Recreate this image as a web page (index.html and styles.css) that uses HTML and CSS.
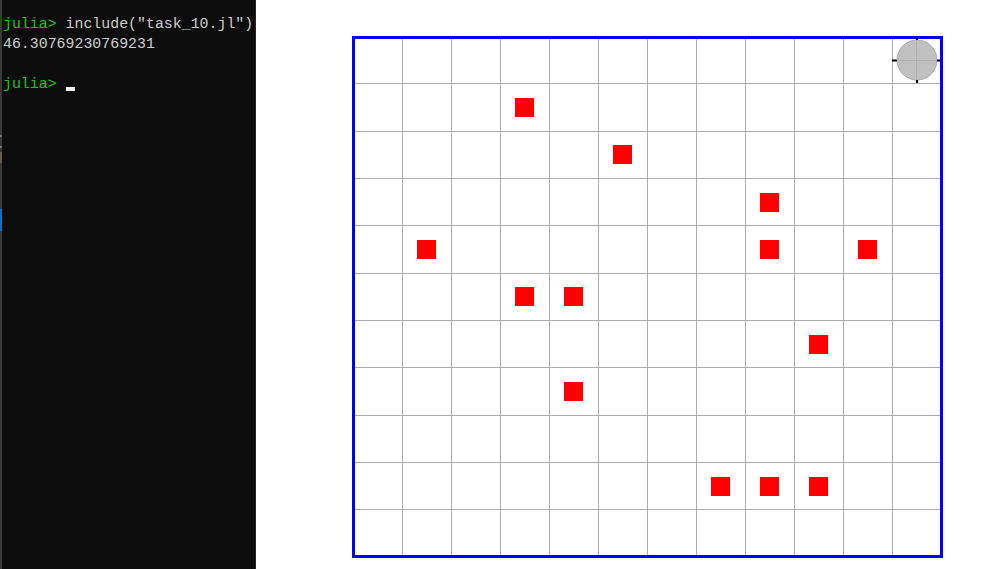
FILE: index.html
```html
<!DOCTYPE html>
<html>
<head>
<meta charset="utf-8">
<link rel="stylesheet" href="styles.css">
</head>
<body class="page">
  <div class="edge">
    <span class="edge-mark mark-a"></span>
    <span class="edge-mark mark-b"></span>
    <span class="edge-mark mark-c"></span>
    <span class="edge-mark mark-d"></span>
  </div>
  <div class="terminal">
    <div class="line"><span class="prompt">julia&gt;</span> include("task_10.jl")</div>
    <div class="line">46.30769230769231</div>
    <div class="line"> </div>
    <div class="line"><span class="prompt">julia&gt;</span> <span class="cursor"></span></div>
  </div>
  <div class="plot">
    <svg class="board" width="591" height="522" viewBox="0 0 591 522">
      <g stroke="#acacac" stroke-width="1">
        <line x1="50.5" y1="0" x2="50.5" y2="522"/>
        <line x1="99.5" y1="0" x2="99.5" y2="522"/>
        <line x1="148.5" y1="0" x2="148.5" y2="522"/>
        <line x1="197.5" y1="0" x2="197.5" y2="522"/>
        <line x1="246.5" y1="0" x2="246.5" y2="522"/>
        <line x1="295.5" y1="0" x2="295.5" y2="522"/>
        <line x1="344.5" y1="0" x2="344.5" y2="522"/>
        <line x1="393.5" y1="0" x2="393.5" y2="522"/>
        <line x1="442.5" y1="0" x2="442.5" y2="522"/>
        <line x1="491.5" y1="0" x2="491.5" y2="522"/>
        <line x1="540.5" y1="0" x2="540.5" y2="522"/>
        <line x1="0" y1="47.5" x2="591" y2="47.5"/>
        <line x1="0" y1="95.5" x2="591" y2="95.5"/>
        <line x1="0" y1="142.5" x2="591" y2="142.5"/>
        <line x1="0" y1="189.5" x2="591" y2="189.5"/>
        <line x1="0" y1="237.5" x2="591" y2="237.5"/>
        <line x1="0" y1="284.5" x2="591" y2="284.5"/>
        <line x1="0" y1="331.5" x2="591" y2="331.5"/>
        <line x1="0" y1="379.5" x2="591" y2="379.5"/>
        <line x1="0" y1="426.5" x2="591" y2="426.5"/>
        <line x1="0" y1="473.5" x2="591" y2="473.5"/>
      </g>
      <rect x="1.5" y="1.5" width="588" height="519" fill="none" stroke="#0000ff" stroke-width="3"/>
      <g fill="#ff0000">
        <rect x="163" y="62" width="19" height="19"/>
        <rect x="261" y="109" width="19" height="19"/>
        <rect x="408" y="157" width="19" height="19"/>
        <rect x="65" y="204" width="19" height="19"/>
        <rect x="408" y="204" width="19" height="19"/>
        <rect x="506" y="204" width="19" height="19"/>
        <rect x="163" y="251" width="19" height="19"/>
        <rect x="212" y="251" width="19" height="19"/>
        <rect x="457" y="299" width="19" height="19"/>
        <rect x="212" y="346" width="19" height="19"/>
        <rect x="359" y="441" width="19" height="19"/>
        <rect x="408" y="441" width="19" height="19"/>
        <rect x="457" y="441" width="19" height="19"/>
      </g>
      <circle cx="565" cy="24" r="20" fill="#c0c0c0" stroke="#aaaaaa" stroke-width="1"/>
      <g stroke="#b2b2b2" stroke-width="1">
        <line x1="564.5" y1="4" x2="564.5" y2="44"/>
        <line x1="545" y1="24.5" x2="585" y2="24.5"/>
      </g>
      <g stroke="#000000" stroke-width="2">
        <line x1="565" y1="1" x2="565" y2="4"/>
        <line x1="565" y1="44" x2="565" y2="47"/>
        <line x1="540" y1="24.5" x2="545" y2="24.5"/>
        <line x1="585" y1="24.5" x2="588" y2="24.5"/>
      </g>
    </svg>
  </div>
</body>
</html>
```

FILE: styles.css
```css
html, body {
  margin: 0;
  padding: 0;
}

.page {
  width: 1003px;
  height: 569px;
  display: flex;
  flex-direction: row;
  background: #ffffff;
  overflow: hidden;
}

.edge {
  width: 2px;
  height: 569px;
  background: #3a3a3a;
  position: relative;
  flex: none;
}

.edge-mark {
  position: absolute;
  left: 0;
  width: 2px;
}

.mark-a { top: 135px; height: 2px; background: #777777; }
.mark-b { top: 146px; height: 2px; background: #777777; }
.mark-c { top: 152px; height: 11px; background: #6b5e3a; }
.mark-d { top: 209px; height: 22px; background: #0e6fc0; }

.terminal {
  width: 254px;
  height: 569px;
  flex: none;
  background: #0c0c0c;
  border-right: 1px solid #262626;
  padding-top: 14px;
  padding-left: 1px;
  box-sizing: border-box;
  overflow: hidden;
  font-family: "Liberation Mono", "DejaVu Sans Mono", monospace;
  font-size: 14.9px;
  line-height: 20px;
  color: #cccccc;
}

.line {
  height: 20px;
  white-space: pre;
}

.prompt {
  color: #16c60c;
}

.cursor {
  display: inline-block;
  width: 9px;
  height: 4px;
  background: #f2f2f2;
  vertical-align: -3px;
}

.plot {
  flex: 1;
  padding-left: 96px;
  padding-top: 36px;
}

.board {
  display: block;
}
```
